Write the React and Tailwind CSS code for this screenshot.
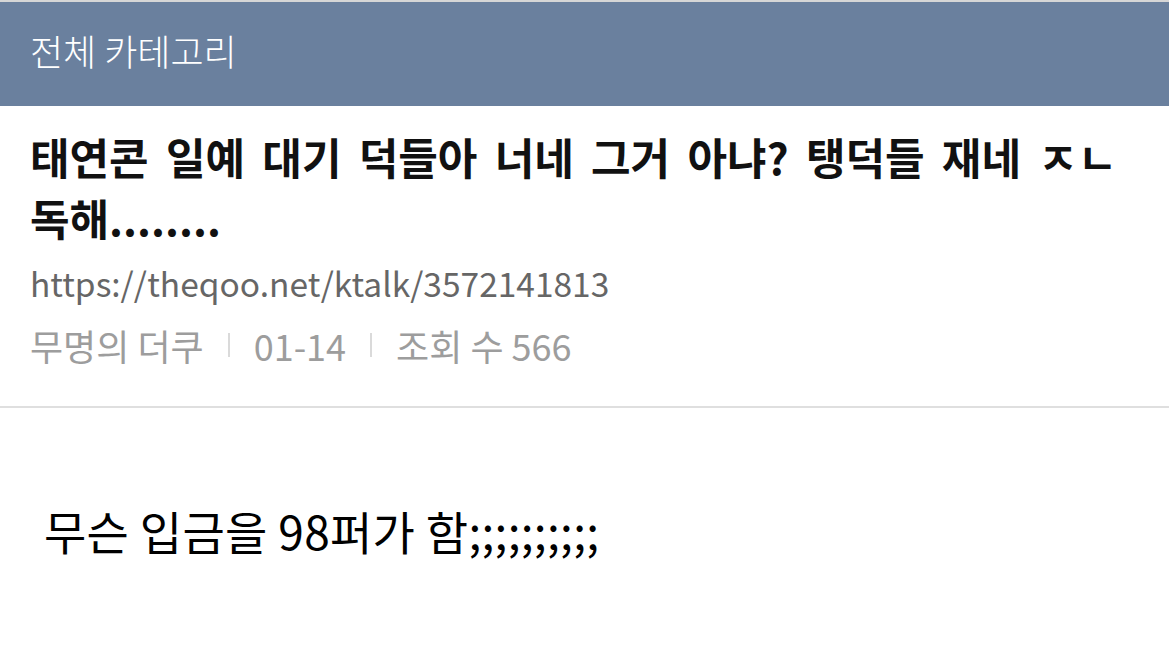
export default function App() {
  const font = { fontFamily: "'Noto Sans CJK KR', 'Noto Sans', sans-serif" };

  return (
    <div className="w-[1169px] h-[658px] bg-white overflow-hidden" style={font}>
      {/* category bar */}
      <div className="border-t-2 border-[#d6d6d6] bg-[#6a809e] h-[106px] flex items-center pl-[30px] pb-[8px]">
        <span className="text-white text-[36px] font-light">전체 카테고리</span>
      </div>

      {/* post header */}
      <div className="pl-[30px] pr-[30px] pt-[20px] h-[302px] border-b-2 border-[#dfdfdf]">
        <h1 className="text-[43px] leading-[61px] font-bold text-[#111] [word-spacing:7.5px]">
          태연콘 일예 대기 덕들아 너네 그거 아냐? 탱덕들 재네 ㅈㄴ 독해........
        </h1>
        <div className="mt-[13px] text-[33.5px] leading-[44px] text-[#666]">
          https://theqoo.net/ktalk/3572141813
        </div>
        <div className="mt-[18px] flex items-center text-[36px] leading-[44px] text-[#9d9d9d]">
          <span>무명의 더쿠</span>
          <span className="mx-[24px] w-[2px] h-[24px] bg-[#dadada]"></span>
          <span>01-14</span>
          <span className="mx-[24px] w-[2px] h-[24px] bg-[#dadada]"></span>
          <span>조회 수 566</span>
        </div>
      </div>

      {/* body */}
      <div className="pt-[94px] pl-[44px]">
        <p className="text-[46px] leading-[56px] text-black [letter-spacing:0.3px]">무슨 입금을 98퍼가 함;;;;;;;;;;</p>
      </div>
    </div>
  );
}
